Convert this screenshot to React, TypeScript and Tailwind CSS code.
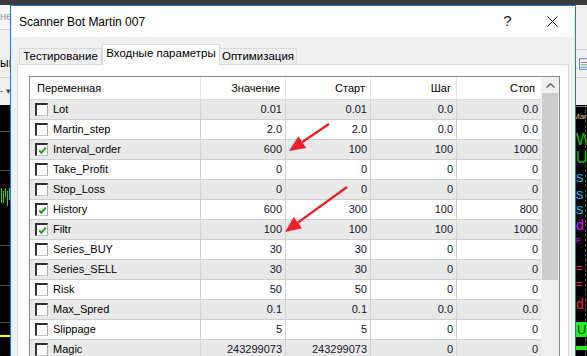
import React from 'react';

type Row = { name: string; on: boolean; v: string; start: string; step: string; stop: string };

const rows: Row[] = [
  { name: 'Lot', on: false, v: '0.01', start: '0.01', step: '0.0', stop: '0.0' },
  { name: 'Martin_step', on: false, v: '2.0', start: '2.0', step: '0.0', stop: '0.0' },
  { name: 'Interval_order', on: true, v: '600', start: '100', step: '100', stop: '1000' },
  { name: 'Take_Profit', on: false, v: '0', start: '0', step: '0', stop: '0' },
  { name: 'Stop_Loss', on: false, v: '0', start: '0', step: '0', stop: '0' },
  { name: 'History', on: true, v: '600', start: '300', step: '100', stop: '800' },
  { name: 'Filtr', on: true, v: '100', start: '100', step: '100', stop: '1000' },
  { name: 'Series_BUY', on: false, v: '30', start: '30', step: '0', stop: '0' },
  { name: 'Series_SELL', on: false, v: '30', start: '30', step: '0', stop: '0' },
  { name: 'Risk', on: false, v: '50', start: '50', step: '0', stop: '0' },
  { name: 'Max_Spred', on: false, v: '0.1', start: '0.1', step: '0.0', stop: '0.0' },
  { name: 'Slippage', on: false, v: '5', start: '5', step: '0', stop: '0' },
  { name: 'Magic', on: false, v: '243299073', start: '243299073', step: '0', stop: '0' },
];

const Checkbox = ({ on }: { on: boolean }) => (
  <span className="w-[13px] h-[13px] shrink-0 bg-white border-t-2 border-l-2 border-r border-b border-t-[#303030] border-l-[#303030] border-r-[#a8a8a8] border-b-[#c4c4c4] flex items-center justify-center">
    {on && (
      <svg width="9" height="9" viewBox="0 0 9 9">
        <path d="M1.2 4.4 L3.4 6.8 L7.8 1.6" fill="none" stroke="#1f9a1f" strokeWidth="1.9" />
      </svg>
    )}
  </span>
);

const cols = 'grid grid-cols-[171px_85px_85px_86px_84px]';

export default function App() {
  return (
    <div className="relative w-[587px] h-[356px] overflow-hidden bg-[#f0f0f0] font-['Liberation_Sans',Arial,sans-serif] text-black">
      {/* terminal behind the dialog */}
      <div className="flex flex-col h-full">
        <div className="h-[5px] bg-[#3a3a3a]" />
        <div className="flex flex-1">
          <div className="w-[10px] flex flex-col">
            <div className="h-[25px] bg-[#f7f7f7] border-b border-[#d6d6d6] text-[11px] text-[#a0a0a0] leading-none pt-[6px] whitespace-nowrap overflow-hidden">не</div>
            <div className="h-[48px] bg-[#f0f0f0] border-b border-[#d0d0d0] text-[12px] leading-none pt-[27px] whitespace-nowrap overflow-hidden">ый</div>
            <div className="h-[27px] bg-[#f0f0f0] text-[9px] text-[#444] flex items-center gap-[3px] whitespace-nowrap overflow-hidden">
              <span>-</span>
              <span>▾</span>
            </div>
            <div className="relative flex-1 bg-black overflow-hidden">
              {[26, 65, 140, 180, 217].map((y) => (
                <div key={y} className="absolute left-0 right-0 border-t border-dashed border-[#5a5a5a]" style={{ top: y }} />
              ))}
              {[1, 3, 5, 7, 9].map((x, i) => (
                <div key={x} className="absolute w-[1px] bg-[#22e022]" style={{ left: x, top: 83 + (i % 2) * 3, height: 15 - (i % 3) * 3 }} />
              ))}
              <div className="absolute left-0 right-0 top-[230px] h-[2px] bg-[#ffff00]" />
            </div>
          </div>
          <div className="flex-1" />
          <div className="w-[11px] flex flex-col">
            <div className="h-[45px] bg-[#f0f0f0] border-b border-[#cfcfcf]" />
            <div className="h-[28px] bg-[#f0f0f0] border-b border-[#cfcfcf] flex items-center pl-[3px]">
              <svg width="10" height="14" viewBox="0 0 10 14">
                <rect x="0.5" y="0.5" width="12" height="13" fill="#fff" stroke="#2f6fbf" />
                <path d="M2 5h8" stroke="#d02020" />
                <path d="M2 8h8" stroke="#20a040" />
                <path d="M2 11h8" stroke="#2f6fbf" />
              </svg>
            </div>
            <div className="h-[27px] bg-[#f0f0f0]" />
            <div className="relative flex-1 bg-black overflow-hidden whitespace-nowrap leading-none">
              <div className="absolute top-[1px] left-0 right-0 h-[1px] bg-[#7a7a7a]" />
              <div className="absolute top-0 bottom-0 left-[9px] border-l border-dashed border-[#5a5a5a]" />
              <span className="absolute left-[-3px] top-[8px] text-[8px] text-[#e8c08a]">Mart</span>
              <span className="absolute left-0 top-[27px] text-[16px] text-[#00c000]">W</span>
              <span className="absolute left-0 top-[45px] text-[16px] text-[#00c000]">U</span>
              <span className="absolute left-0 top-[68px] text-[11px] text-[#00d8ff]">S</span>
              <span className="absolute left-0 top-[85px] text-[11px] text-[#00d8ff]">S</span>
              <span className="absolute left-0 top-[100px] text-[11px] text-[#00d8ff]">S</span>
              <span className="absolute left-0 top-[113px] text-[14px] text-[#ff00ff]">d</span>
              <span className="absolute left-0 top-[132px] text-[8px] text-[#ff00ff]">F</span>
              <span className="absolute left-0 top-[158px] text-[11px] text-[#ff2020]">=</span>
              <span className="absolute left-0 top-[174px] text-[11px] text-[#ff2020]">=</span>
              <span className="absolute left-0 top-[192px] text-[14px] text-[#ff2020]">d</span>
              <div className="absolute left-0 right-0 top-[217px] h-[15px] bg-[#22ee22] text-[13px] text-[#005000] pl-[1px] pt-[1px]">U</div>
              <div className="absolute left-0 right-0 top-[241px] h-[4px] bg-[#22ee22]" />
            </div>
          </div>
        </div>
      </div>

      {/* dialog */}
      <div className="absolute left-[10px] top-[5px] w-[566px] h-[360px] border border-[#1a7cd6] bg-[#f0f0f0] flex flex-col">
        <div className="h-[31px] bg-white flex items-center pl-[8px] shrink-0">
          <span className="text-[12px]">Scanner Bot Martin 007</span>
          <div className="ml-auto flex h-full">
            <div className="w-[45px] flex items-center justify-center text-[15px] text-[#222]">?</div>
            <div className="w-[45px] flex items-center justify-center">
              <svg width="11" height="11" viewBox="0 0 11 11">
                <path d="M0.5 0.5 L10.5 10.5 M10.5 0.5 L0.5 10.5" stroke="#222" strokeWidth="1" />
              </svg>
            </div>
          </div>
        </div>

        <div className="flex-1 flex flex-col px-[6px] pt-[7px]">
          <div className="flex items-end pl-[2px] h-[20px] relative z-10 text-[11.5px]">
            <div className="w-[83px] h-[16px] border border-b-0 border-[#d9d9d9] bg-[#f0f0f0] flex items-center justify-center">Тестирование</div>
            <div className="w-[118px] h-[21px] -mb-[1px] border border-b-0 border-[#d9d9d9] bg-white flex items-center justify-center pb-[3px]">Входные параметры</div>
            <div className="w-[77px] h-[16px] border border-b-0 border-l-0 border-[#d9d9d9] bg-[#f0f0f0] flex items-center justify-center">Оптимизация</div>
          </div>

          <div className="flex-1 border border-[#d9d9d9] bg-white pl-[11px] pr-[8px] pt-[11px]">
            <div className="flex border border-[#828790] text-[11px] leading-none">
              <div className="w-[511px]">
                <div className={`${cols} h-[23px] border-b border-[#d8d8d8] bg-white`}>
                  <div className="border-r border-[#e5e5e5] flex items-center pl-[7px]">Переменная</div>
                  <div className="border-r border-[#e5e5e5] flex items-center justify-end pr-[5px]">Значение</div>
                  <div className="border-r border-[#e5e5e5] flex items-center justify-end pr-[5px]">Старт</div>
                  <div className="border-r border-[#e5e5e5] flex items-center justify-end pr-[5px]">Шаг</div>
                  <div className="flex items-center justify-end pr-[6px]">Стоп</div>
                </div>
                {rows.map((r, i) => (
                  <div
                    key={r.name}
                    className={`${cols} h-[20px] border-b border-[#cfcfcf] ${i % 2 === 0 ? 'bg-[#e9e9e9]' : 'bg-white'}`}
                  >
                    <div className="border-r border-[#d2d2d2] flex items-center pl-[5px] gap-[5px]">
                      <Checkbox on={r.on} />
                      <span>{r.name}</span>
                    </div>
                    <div className="border-r border-[#d2d2d2] flex items-center justify-end pr-[3px] text-[#14142c]">{r.v}</div>
                    <div className="border-r border-[#d2d2d2] flex items-center justify-end pr-[3px] text-[#14142c]">{r.start}</div>
                    <div className="border-r border-[#d2d2d2] flex items-center justify-end pr-[3px] text-[#14142c]">{r.step}</div>
                    <div className="flex items-center justify-end pr-[3px] text-[#14142c]">{r.stop}</div>
                  </div>
                ))}
              </div>
              <div className="w-[18px] bg-[#f0f0f0] flex flex-col">
                <div className="h-[16px] flex items-center justify-center">
                  <svg width="9" height="5" viewBox="0 0 9 5">
                    <path d="M0.5 4.5 L4.5 0.8 L8.5 4.5" fill="none" stroke="#606060" strokeWidth="1.4" />
                  </svg>
                </div>
                <div className="h-[187px] mx-[1px] bg-[#cdcdcd]" />
              </div>
            </div>
          </div>
        </div>
      </div>

      {/* red annotation arrows */}
      <svg className="absolute inset-0 pointer-events-none" width="587" height="356" viewBox="0 0 587 356">
        <line x1="329" y1="124" x2="302.3" y2="142.1" stroke="#e8212b" strokeWidth="2.4" />
        <polygon points="289,151 306.2,147.9 298.4,136.3" fill="#e8212b" />
        <line x1="347" y1="187" x2="297.9" y2="222.6" stroke="#e8212b" strokeWidth="2.4" />
        <polygon points="285,232 302,228.3 293.8,216.9" fill="#e8212b" />
      </svg>
    </div>
  );
}
